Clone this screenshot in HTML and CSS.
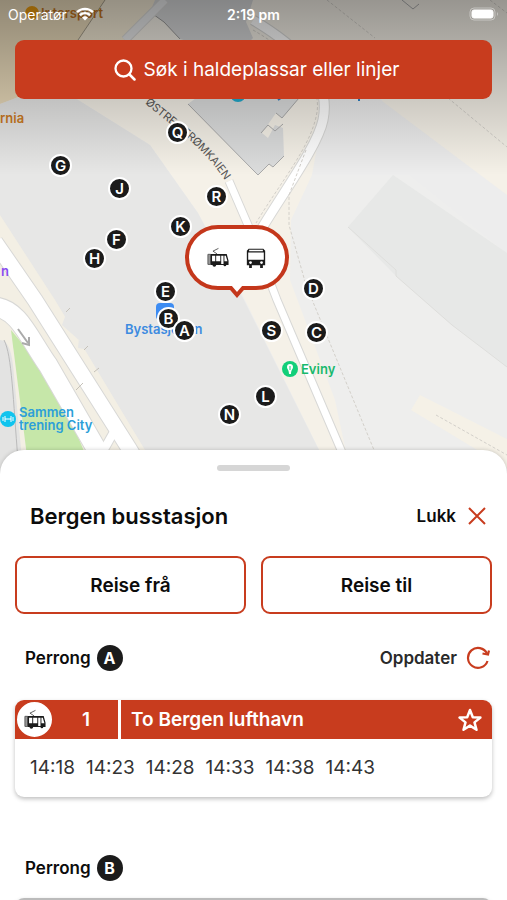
FILE: index.html
```
<!DOCTYPE html>
<html lang="nn">
<head>
    <meta charset="utf-8">
    <meta name="viewport" content="width=device-width, initial-scale=1">
    <title>Bergen busstasjon</title>
    <link rel="stylesheet" href="styles.css">
</head>
<body>
    <!-- Shared icons -->
    <svg class="symbols" aria-hidden="true">
        <symbol id="tram" viewBox="0 0 24 24">
            <path d="M11 7.500L6.500 4.500L12.500 1.500" fill="none" stroke="#555" stroke-width="1"/>
            <path d="M1 8v11h3V8z" fill="#999" stroke="#555"/>
            <path d="M4 7.500H21.500L23.500 15V19.500H21a1.500 1.500 0 0 1-3 0H10a2 2 0 0 1-4 0H4z" fill="#1b1b1b"/>
            <path d="M5.500 9.500h3.500v6H5.500zM10 9.500h4.500v6H10zM15.500 9.500h2.500v9h-2.500zM19 9.500h1.500l1.800 6H19z" fill="#fff"/>
        </symbol>
        <symbol id="bus" viewBox="0 0 24 24">
            <path d="M4 2h16l2 2v16h-2.500v3h-3v-3h-9v3h-3v-3H2V4z" fill="#1b1b1b"/>
            <path d="M4.500 3h15v1.500h-15zM3.500 6h17v8h-17z" fill="#fff"/>
            <circle cx="6" cy="17" r="1.500" fill="#fff"/>
            <circle cx="18" cy="17" r="1.500" fill="#fff"/>
        </symbol>
    </svg>

    <main class="app">
        <section class="map" aria-label="Kart">
            <svg class="map-canvas" viewBox="0 0 507 480" preserveAspectRatio="xMidYMin slice">
                <defs>
                    <linearGradient id="shade" x1="0" y1="0" x2="0" y2="1">
                        <stop offset="0" stop-color="#000" stop-opacity=".38"/>
                        <stop offset=".6" stop-color="#000" stop-opacity=".15"/>
                        <stop offset="1" stop-color="#000" stop-opacity="0"/>
                    </linearGradient>
                    <path id="street" d="M145 103C165 122 205 145 231 190"/>
                </defs>
                <rect width="507" height="480" fill="#eeeeed"/>

                <!-- Ground -->
                <path d="M75 98L170 0H507V220L420 150L380 98H340L312 175L291 220L290 280L335 400L352 480H334L240 290L198 213L150 145Z" fill="#f5f1e8"/>
                <path d="M0 0H170L75 98L15 98L0 110Z" fill="#f2e9d4"/>
                <path d="M0 0H105L78 40L16 98L0 104Z" fill="#eadbbb"/>
                <path d="M0 104L16 98H75L150 145L198 213L244 300L334 480H155L0 225Z" fill="#e7e7e6"/>
                <path d="M0 215L55 300L145 450L160 480H0Z" fill="#f3efe4"/>
                <path d="M66 314L80 327L78 348L90 350L62 325Z" fill="#e7e7e6"/>
                <path d="M0 340Q10 340 13 365L24 480H0Z" fill="#e3e3e2"/>
                <path d="M11 330L56 384L96 480H30Z" fill="#c6e7a9"/>
                <path d="M326 98L378 98L507 195V253L410 175L312 175Z" fill="#ededed"/>
                <path d="M393 175L507 253V367L452 325L396 276L348 227Z" fill="#e7e8e7"/>
                <path d="M348 227L396 270L396 276L452 325L507 367" fill="none" stroke="#dededc"/>
                <path d="M420 395L411 410L507 468V439Z" fill="#f5f1e7"/>

                <!-- Buildings -->
                <path d="M155 0H253L246 22L253 38L237 55L180 39L164 22L150 12Z" fill="#d6d7d8"/>
                <path d="M150 12L164 22L180 39" fill="none" stroke="#999"/>
                <path d="M105 0L78 40" stroke="#a39b88" fill="none"/>
                <path d="M188 104L220 80H310L299 98L282 118L276 113L262 133L268 138L275 125L283 128L284 156L273 167L269 164L258 175L253 170Z" fill="#dcdddd"/>
                <path d="M188 104L253 170M299 98L282 118L276 113M261 133L268 125L275 131L283 124M284 156L273 167L269 164L258 175L253 170M402 0L413 9L419 4" fill="none" stroke="#aaa"/>

                <!-- Roads -->
                <g fill="none" stroke="#d8d8d6" stroke-linejoin="round">
                    <path d="M165 0L125 40" stroke-width="9"/>
                    <path d="M253 20C295 45 332 77 323 120C318 145 285 190 262 228" stroke-width="11"/>
                    <path d="M229 181L251 232L277 300L341 450L352 480" stroke-width="9"/>
                    <path d="M-5 242L35 300L130 450L148 480" stroke-width="17"/>
                    <path d="M-5 307C18 309 28 336 48 365L97 450L112 480" stroke-width="21"/>
                    <path d="M115 430L98 460" stroke-width="10"/>
                    <path d="M4 340C12 355 13 400 18 460" stroke="#bbb"/>
                </g>
                <g fill="none" stroke="#fff" stroke-linejoin="round">
                    <path d="M165 0L125 40" stroke="#e9eaeb" stroke-width="7"/>
                    <path d="M253 20C295 45 332 77 323 120C318 145 285 190 262 228" stroke-width="9"/>
                    <path d="M229 181L251 232L277 300L341 450L352 480" stroke-width="7"/>
                    <path d="M-5 242L35 300L130 450L148 480" stroke-width="15"/>
                    <path d="M-5 307C18 309 28 336 48 365L97 450L112 480" stroke-width="19"/>
                    <path d="M115 430L98 460" stroke-width="8"/>
                </g>
                <path d="M76 390L83 383M94 372L99 368M84 350L88 346M66 312L70 308" stroke="#c5c1b8" fill="none"/>
                <path d="M18 329L28 343M22 343L29 345L29 337" fill="none" stroke="#aaa" stroke-width="2"/>
                <g fill="none" stroke="#d3d0ca" stroke-dasharray="3 2">
                    <path d="M253 30C288 50 322 80 317 112C312 145 282 180 256 223"/>
                    <path d="M306 150L289 195L289 225L306 285L374 450"/>
                    <path d="M327 0L375 38M448 98L507 147M490 0L507 13M436 415L507 455"/>
                </g>

                <!-- Labels -->
                <g class="map-labels">
                    <circle cx="32" cy="13" r="7" fill="#e89a10"/>
                    <text x="41" y="18" fill="#c1731c">Intersport</text>
                    <text x="0" y="123" fill="#cc7a22">rnia</text>
                    <text x="1" y="276" fill="#8a4df0">n</text>
                    <circle cx="238" cy="94" r="8" fill="#20a9cc"/>
                    <path d="M278 100l3-2M359 97v4" stroke="#2c7fc4" stroke-width="2"/>
                    <text class="street"><textPath href="#street">ØSTRE STRØMKAIEN</textPath></text>
                    <rect x="156" y="303" width="18" height="17" rx="4" fill="#3d8cf2"/>
                    <text x="125" y="334" fill="#3d8be0">Bystasjonen</text>
                    <circle cx="290" cy="369" r="8" fill="#12cf79"/>
                    <path d="M290 364a3 3 0 0 1 3 3c0 2-2 3-2 7h-2c0-4-2-5-2-7a3 3 0 0 1 3-3z" fill="#fff"/>
                    <path d="M290 366v4" stroke="#12cf79"/>
                    <text x="301" y="374" fill="#19b96d">Eviny</text>
                    <circle cx="8" cy="419" r="8" fill="#10c4ee"/>
                    <path d="M3 417v4M5 416v6M5 419h6M11 416v6M13 417v4" stroke="#fff" fill="none"/>
                    <text x="19" y="417" fill="#2c9fd8">Sammen</text>
                    <text x="19" y="430" fill="#2c9fd8">trening City</text>
                </g>
                <rect width="507" height="175" fill="url(#shade)"/>
            </svg>

            <button class="pin pin-q">Q</button>
            <button class="pin pin-g">G</button>
            <button class="pin pin-j">J</button>
            <button class="pin pin-r">R</button>
            <button class="pin pin-k">K</button>
            <button class="pin pin-f">F</button>
            <button class="pin pin-h">H</button>
            <button class="pin pin-e">E</button>
            <button class="pin pin-b">B</button>
            <button class="pin pin-a">A</button>
            <button class="pin pin-d">D</button>
            <button class="pin pin-s">S</button>
            <button class="pin pin-c">C</button>
            <button class="pin pin-l">L</button>
            <button class="pin pin-n">N</button>

            <button class="callout" aria-label="Bergen busstasjon">
                <svg class="callout-shape" viewBox="0 0 106 74">
                    <path d="M34 2H72A31 30.500 0 0 1 72 63H59L53 70L47 63H34A31 30.500 0 0 1 34 2Z" fill="#fff" stroke="#c4371b" stroke-width="4"/>
                </svg>
                <svg class="vehicle"><use href="#tram"/></svg>
                <svg class="vehicle"><use href="#bus"/></svg>
            </button>

            <header class="status-bar">
                <span class="carrier">Operatør
                    <svg class="wifi" viewBox="0 0 20 15">
                        <path d="M1.500 5.500a12 12 0 0 1 17 0M4.500 8.700a8 8 0 0 1 11 0" fill="none" stroke="#fff" stroke-width="2.500"/>
                        <path d="M10 14.500L6.800 11.200a4.500 4.500 0 0 1 6.400 0z" fill="#fff"/>
                    </svg>
                </span>
                <span class="clock">2:19 pm</span>
                <svg class="battery" viewBox="0 0 30 14">
                    <rect x="1" y="1" width="25" height="12" rx="4" fill="none" stroke="#fff" stroke-opacity=".4" stroke-width="1"/>
                    <rect x="3" y="3" width="21" height="8" rx="2" fill="#fff" stroke="#fff"/>
                    <path d="M28 5q2 2 0 4z" fill="#fff" fill-opacity=".4"/>
                </svg>
            </header>

            <button class="search">
                <svg class="search-icon" viewBox="0 0 22 22">
                    <circle cx="9.500" cy="9.500" r="8" fill="none" stroke="#fff" stroke-width="2.300"/>
                    <path d="M15.500 15.500L20.500 20.500" stroke="#fff" stroke-width="2.500" stroke-linecap="round"/>
                </svg>
                Søk i haldeplassar eller linjer
            </button>
        </section>

        <section class="sheet">
            <div class="handle"></div>

            <div class="sheet-header">
                <h1>Bergen busstasjon</h1>
                <button class="link-button">Lukk
                    <svg class="close-icon" viewBox="0 0 18 18"><path d="M1 1L17 17M17 1L1 17" stroke="#c83c1e" stroke-width="2"/></svg>
                </button>
            </div>

            <div class="travel">
                <button class="travel-button">Reise frå</button>
                <button class="travel-button">Reise til</button>
            </div>

            <div class="platform">
                <h2>Perrong <span class="badge">A</span></h2>
                <button class="link-button update">Oppdater
                    <svg class="refresh-icon" viewBox="0 0 24 24">
                        <path d="M21 7.500A10 10 0 1 0 21.500 15" fill="none" stroke="#c83c1e" stroke-width="2.200"/>
                        <path d="M16.500 7.500L22 8.500L23 4.500" fill="none" stroke="#c83c1e" stroke-width="2.200"/>
                    </svg>
                </button>
            </div>

            <article class="card">
                <div class="line">
                    <div class="line-number">
                        <span class="line-icon"><svg class="vehicle"><use href="#tram"/></svg></span>
                        <span class="number">1</span>
                    </div>
                    <h3>To Bergen lufthavn</h3>
                    <button class="favourite" aria-label="Favoritt">
                        <svg class="star" viewBox="0 0 24 24"><path d="M12 2L14.800 9.200L22.400 9.600L16.500 14.400L18.500 21.800L12 17.600L5.500 21.800L7.500 14.400L1.600 9.600L9.200 9.200Z" fill="none" stroke="#fff" stroke-width="2.500" stroke-linejoin="round"/></svg>
                    </button>
                </div>
                <ul class="times">
                    <li>14:18</li>
                    <li>14:23</li>
                    <li>14:28</li>
                    <li>14:33</li>
                    <li>14:38</li>
                    <li>14:43</li>
                </ul>
            </article>

            <div class="platform">
                <h2>Perrong <span class="badge">B</span></h2>
            </div>

            <article class="card card-next"></article>
        </section>
    </main>
</body>
</html>
```

FILE: styles.css
```
/* Station page: map with a departure sheet */

* {
    box-sizing: border-box;
}

body {
    margin: 0;
    font-family: Inter, "Liberation Sans", sans-serif;
    color: #0c0c0c;
    background-color: #fff;
}

h1, h2, h3, ul {
    margin: 0;
    padding: 0;
}

button {
    font-family: inherit;
    color: inherit;
    padding: 0;
    border: none;
    background: none;
    cursor: pointer;
}

.symbols {
    position: absolute;
    width: 0;
    height: 0;
}

.app {
    display: flex;
    flex-direction: column;
    height: 100vh;
    overflow: hidden;
}

/* Map */

.map {
    position: relative;
    flex: none;
    height: 480px;
    overflow: hidden;
}

.map-canvas {
    position: absolute;
    top: 0;
    left: 0;
    width: 100%;
    height: 100%;
}

.map-labels {
    font-size: 13px;
    font-weight: 600;
}

.street {
    font-size: 11px;
    font-weight: 400;
    fill: #555;
}

.pin {
    position: absolute;
    width: 23px;
    height: 23px;
    border: 2px solid #fff;
    border-radius: 50%;
    background-color: #1b1b1b;
    color: #fff;
    font-size: 15px;
    font-weight: 600;
    line-height: 19px;
}

.pin-q { left: 166px; top: 121px; }
.pin-g { left: 49px; top: 154px; }
.pin-j { left: 108px; top: 177px; }
.pin-r { left: 205px; top: 185px; }
.pin-k { left: 169px; top: 215px; }
.pin-f { left: 105px; top: 228px; }
.pin-h { left: 83px; top: 247px; }
.pin-e { left: 154px; top: 280px; }
.pin-b { left: 157px; top: 307px; }
.pin-a { left: 173px; top: 319px; }
.pin-d { left: 302px; top: 277px; }
.pin-s { left: 260px; top: 319px; }
.pin-c { left: 305px; top: 321px; }
.pin-l { left: 254px; top: 385px; }
.pin-n { left: 218px; top: 403px; }

.callout {
    position: absolute;
    left: 184px;
    top: 225px;
    width: 106px;
    height: 66px;
    display: flex;
    align-items: center;
    justify-content: center;
    gap: 16px;
}

.callout-shape {
    position: absolute;
    top: 0;
    left: 0;
    width: 106px;
    height: 74px;
}

.vehicle {
    position: relative;
    width: 22px;
    height: 22px;
}

.status-bar {
    position: relative;
    display: grid;
    grid-template-columns: 1fr auto 1fr;
    align-items: center;
    height: 28px;
    padding: 0 8px;
    color: #fff;
    font-size: 14px;
}

.carrier {
    display: flex;
    align-items: center;
    gap: 8px;
}

.wifi {
    width: 20px;
    height: 14px;
}

.clock {
    font-weight: 600;
}

.battery {
    justify-self: end;
    width: 30px;
    height: 14px;
}

.search {
    position: relative;
    display: flex;
    align-items: center;
    justify-content: center;
    gap: 8px;
    width: calc(100% - 30px);
    height: 59px;
    margin: 12px 15px 0;
    padding-left: 6px;
    border-radius: 9px;
    background-color: #c83c1e;
    color: #fff;
    font-size: 19px;
}

.search-icon {
    width: 22px;
    height: 22px;
}

/* Sheet */

.sheet {
    position: relative;
    flex: 1;
    min-height: 0;
    margin-top: -30px;
    padding: 15px 15px 0;
    border-radius: 24px 24px 0 0;
    background-color: #fff;
    box-shadow: 0 0 4px rgba(0, 0, 0, 0.2);
    overflow: hidden;
}

.handle {
    width: 73px;
    height: 6px;
    margin: 0 auto;
    border-radius: 3px;
    background-color: #d6d6d6;
}

.sheet-header {
    display: flex;
    align-items: center;
    justify-content: space-between;
    height: 40px;
    margin-top: 25px;
    padding: 0 6px 0 15px;
}

h1 {
    font-size: 22px;
    font-weight: 600;
}

.link-button {
    display: flex;
    align-items: center;
    gap: 12px;
    font-size: 17px;
    font-weight: 600;
}

.update {
    gap: 9px;
    color: #2a2a2a;
}

.close-icon {
    width: 18px;
    height: 18px;
}

.refresh-icon {
    width: 24px;
    height: 24px;
}

.travel {
    display: grid;
    grid-template-columns: 1fr 1fr;
    gap: 15px;
    margin-top: 20px;
}

.travel-button {
    height: 58px;
    border: 2px solid #c83c1e;
    border-radius: 9px;
    font-size: 19px;
    font-weight: 600;
}

.platform {
    display: flex;
    align-items: center;
    justify-content: space-between;
    height: 30px;
    margin-top: 29px;
    padding: 0 2px 0 10px;
}

h2 {
    display: flex;
    align-items: center;
    gap: 6px;
    font-size: 17px;
    font-weight: 600;
}

.badge {
    width: 26px;
    height: 26px;
    border-radius: 50%;
    background-color: #1b1b1b;
    color: #fff;
    font-size: 16px;
    font-weight: 700;
    line-height: 26px;
    text-align: center;
}

.card {
    margin-top: 27px;
    border-radius: 9px;
    box-shadow: 0 2px 4px rgba(0, 0, 0, 0.25);
    overflow: hidden;
}

.card + .platform {
    margin-top: 56px;
}

.card-next {
    height: 40px;
    margin-top: 15px;
    border-top: 2px solid #bbb;
}

.line {
    display: flex;
    height: 39px;
    background-color: #c83c1e;
    color: #fff;
}

.line-number {
    display: flex;
    align-items: center;
    width: 106px;
    border-right: 3px solid #fff;
    font-size: 19px;
    font-weight: 600;
}

.line-icon {
    display: flex;
    align-items: center;
    justify-content: center;
    width: 39px;
    height: 39px;
    border: 2px solid #c83c1e;
    border-radius: 50%;
    background-color: #fff;
}

.number {
    flex: 1;
    text-align: center;
}

h3 {
    flex: 1;
    padding-left: 10px;
    font-size: 19px;
    font-weight: 600;
    line-height: 39px;
}

.favourite {
    display: flex;
    align-items: center;
    width: 34px;
}

.star {
    width: 24px;
    height: 24px;
}

.times {
    display: flex;
    gap: 11px;
    padding: 18px 15px;
    color: #333;
    font-size: 19px;
    line-height: 22px;
    list-style: none;
}
```
